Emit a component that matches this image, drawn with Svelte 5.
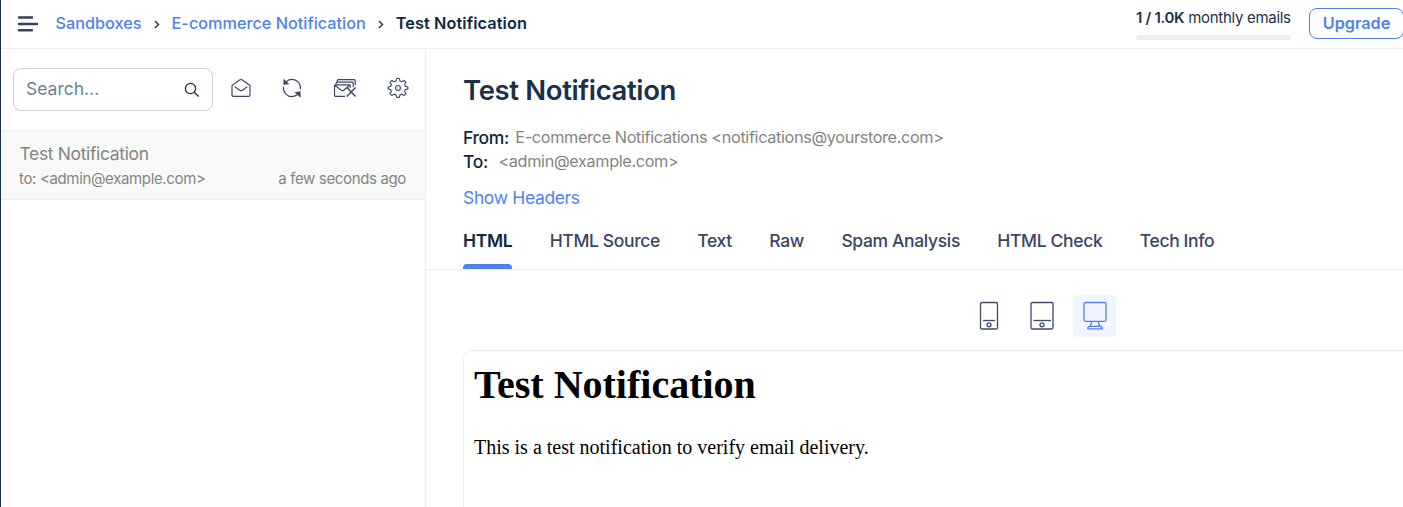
<script>
  const crumbs = ['Sandboxes', 'E-commerce Notification'];
  const tabs = ['HTML', 'HTML Source', 'Text', 'Raw', 'Spam Analysis', 'HTML Check', 'Tech Info'];
  let active = $state('HTML');
</script>

<div class="app">
  <header>
    <button class="plain menu" aria-label="Menu">
      <svg width="22" height="18" viewBox="0 0 22 18" fill="none" stroke="#35405a" stroke-width="2.4" stroke-linecap="round">
        <path d="M2 2.5h13M2 9h18M2 15.2h13" />
      </svg>
    </button>
    <nav>
      {#each crumbs as crumb}
        <span class="link">{crumb}</span>
        <svg class="chevron" width="6" height="9" viewBox="0 0 6 9" fill="none" stroke="#1b314a" stroke-width="1.4"><path d="M1 1l3.5 3.5L1 8" /></svg>
      {/each}
      <strong>Test Notification</strong>
    </nav>
    <div class="quota">
      <div class="usage"><b>1 / 1.0K</b> monthly emails</div>
      <div class="bar"></div>
    </div>
    <button class="upgrade">Upgrade</button>
  </header>

  <div class="body">
    <aside>
      <div class="tools">
        <div class="search">
          <span>Search...</span>
          <svg width="16" height="16" viewBox="0 0 16 16" fill="none" stroke="#1b2d49" stroke-width="1.3"><circle cx="6.5" cy="6.5" r="5.1" /><path d="M10.2 10.2l4.5 4.3" /></svg>
        </div>
        <div class="actions">
          <svg width="22" height="22" viewBox="0 0 22 22" fill="none" stroke="#3c4866" stroke-width="1.2" stroke-linejoin="round">
            <path d="M2 8.4L10 2.8q1-.6 2 0L20 8.4V18q0 1.3-1.3 1.3H3.3Q2 19.3 2 18zM4.8 9.7l5.2 3.7q1 .6 2 0l5.2-3.7" />
          </svg>
          <svg width="22" height="22" viewBox="0 0 22 22" fill="none" stroke="#3c4866" stroke-width="1.2">
            <path d="M2.400 9.800c-.4 5.600 3.600 9.800 8.600 9.800 2.300 0 4.300-.8 5.900-2.300" />
            <path d="M19.600 12.200c.4-5.600-3.600-9.800-8.600-9.800-2.300 0-4.300.8-5.900 2.300" />
            <path d="M3 3.200v4l4-.4zM19 14.900v4.400l-4.200-3.700z" fill="#3c4866" />
          </svg>
          <svg width="24" height="22" viewBox="0 0 24 22" fill="none" stroke="#3c4866" stroke-width="1.2" stroke-linejoin="round">
            <path d="M12 19.300H2.500q-1 0-1-1V8.800q0-1 1-1h13.800q1 0 1 1v2.200M2 8.200l6.200 5q1.200.8 2.400 0l6-5" />
            <path d="M2.600 7.500l1-2.300h15.600q1 0 1 1V10M4 4.800l.8-2.100h16.400q1 0 1 1V8" />
            <path d="M14 10.500l8.500 9M22.500 10.500l-8.700 9" stroke-width="1.500" />
          </svg>
          <svg width="22" height="22" viewBox="0 0 22 22" fill="none" stroke="#3c4866" stroke-width="1.200" stroke-linejoin="round">
            <g transform="translate(.6 .1) scale(.945)">
              <path d="M9.500 1.500h3l.6 2.700 2 .8 2.300-1.500 2.100 2.100L18 7.900l.8 2 2.700.6v2l-2.700.7-.8 1.900 1.500 2.300-2.100 2.100-2.300-1.500-2 .8-.6 2.700h-3l-.6-2.700-2-.8-2.300 1.500-2.100-2.100L4 15.100l-.8-1.900-2.700-.7v-2l2.700-.6.8-2-1.500-2.300 2.100-2.100L6.900 5l2-.8z" />
              <circle cx="11" cy="11.500" r="2.600" />
            </g>
          </svg>
        </div>
      </div>
      <article>
        <div class="subject">Test Notification</div>
        <div class="meta"><span>to: &lt;admin@example.com&gt;</span><span>a few seconds ago</span></div>
      </article>
    </aside>

    <main>
      <section class="message">
        <h1>Test Notification</h1>
        <div class="address"><b>From:</b><span>E-commerce Notifications &lt;notifications@yourstore.com&gt;</span></div>
        <div class="address to"><b>To:</b><span>&lt;admin@example.com&gt;</span></div>
        <span class="headers">Show Headers</span>
      </section>
      <div class="tabs">
        {#each tabs as tab}
          <button class="plain tab" class:active={active === tab} onclick={() => (active = tab)}>{tab}</button>
        {/each}
      </div>
      <div class="devices">
        <div class="device">
          <svg width="30" height="30" viewBox="0 0 30 30" fill="none" stroke="#3c4866" stroke-width="1.300"><rect x="6.500" y="1.500" width="17" height="26.500" rx="1.500" /><path d="M9 19.500h12" /><circle cx="15" cy="23.800" r="2" /></svg>
        </div>
        <div class="device">
          <svg width="30" height="30" viewBox="0 0 30 30" fill="none" stroke="#3c4866" stroke-width="1.300"><rect x="4" y="1.500" width="22" height="26.500" rx="1.500" /><path d="M6.500 19.500h17.500" /><circle cx="15" cy="23.800" r="2" /></svg>
        </div>
        <div class="device selected">
          <svg width="30" height="30" viewBox="0 0 30 30" fill="none" stroke="#4f82f0" stroke-width="1.300" stroke-linejoin="round"><rect x="4" y="1.500" width="22" height="18.800" rx="1.500" /><path d="M11.700 20.500l-1.400 4.700M18.300 20.500l1.400 4.700M9 25.300h12q1.300 1.200 1.300 2.500H7.700q0-1.300 1.300-2.500z" /></svg>
        </div>
      </div>
      <div class="preview">
        <h2>Test Notification</h2>
        <p>This is a test notification to verify email delivery.</p>
      </div>
    </main>
  </div>
</div>

<style>
  :global(body) { margin: 0; overflow: hidden; background: #fff; }
  * { box-sizing: border-box; }
  svg { display: block; flex: none; }
  .app { height: 507px; border-left: 1px solid #1b2d49; display: flex; flex-direction: column; font-family: Inter, sans-serif; color: #1b314a; overflow: hidden; }
  .plain { border: 0; padding: 0; background: none; font: inherit; color: inherit; }
  header { height: 49px; flex: none; border-bottom: 1px solid #ebeeed; display: flex; align-items: flex-start; }
  .menu { margin: 15px 0 0 16px; }
  nav { display: flex; align-items: center; height: 46px; margin-left: 16.5px; font-size: 16.25px; white-space: nowrap; }
  .link { color: #4f82f0; font-weight: 500; }
  .chevron { margin: 2px 12px 0 12px; }
  nav strong { font-weight: 600; color: #0f2740; letter-spacing: 0.1px; }
  .quota { width: 155px; margin-left: auto; padding-top: 8px; font-size: 15px; letter-spacing: -0.02em; line-height: 20px; white-space: nowrap; }
  .quota b { font-weight: 600; }
  .bar { height: 5px; margin-top: 7px; border-radius: 3px; background: #ededed; }
  .upgrade { width: 95px; height: 31px; margin: 8px -1px 0 18px; padding: 0 0 2px; border: 1px solid #4f82f0; border-radius: 8px; background: #fff; color: #4f82f0; font: 600 16.25px Inter, sans-serif; }
  .body { flex: 1; display: flex; min-height: 0; }
  aside { width: 425px; border-right: 1px solid #ebeeed; flex: none; }
  .tools { height: 81px; padding: 19px 0 0 12px; display: flex; }
  .search { width: 200px; height: 43px; border: 1px solid #cdd0d6; border-radius: 8px; display: flex; align-items: center; justify-content: space-between; padding: 0 12px; font-size: 17.5px; color: #6a8296; }
  .search span { padding-bottom: 2px; }
  .actions { display: flex; gap: 29.7px; margin: 9px 0 0 16.5px; height: 22px; }
  article { height: 70px; background: #f8faf9; border: solid #ebeeed; border-width: 1px 0; padding: 11px 19px 0 18px; color: #858580; letter-spacing: -0.022em; }
  .subject { font-size: 17.5px; line-height: 24px; padding-left: 0.5px; }
  .meta { display: flex; justify-content: space-between; font-size: 15px; line-height: 24px; padding-top: 1px; }
  main { flex: 1; min-width: 0; display: flex; flex-direction: column; letter-spacing: -0.022em; }
  .message { height: 170px; padding: 23px 0 0 37px; }
  h1 { margin: 0 0 17px; font-size: 27.5px; line-height: 36px; font-weight: 600; letter-spacing: -0.013em; }
  .address { display: flex; align-items: center; height: 24px; font-size: 16.25px; gap: 6.3px; color: #858580; }
  .address b { font-size: 17.5px; font-weight: 500; color: #0f2740; }
  .address.to { gap: 10.5px; }
  .headers { display: block; margin-top: 13px; color: #4f82f0; font-size: 17.5px; line-height: 24px; }
  .tabs { display: flex; gap: 37.4px; height: 51px; flex: none; padding-left: 37px; border-bottom: 1px solid #ebeeed; font-size: 17.5px; font-weight: 500; color: #3a4663; }
  .tab { letter-spacing: inherit; position: relative; padding-bottom: 7px; white-space: nowrap; }
  .active { color: #0f2740; font-weight: 600; }
  .active::after { content: ''; position: absolute; left: 0; right: 0; bottom: 0; height: 5px; border-radius: 4px 4px 0 0; background: #4f82f0; }
  .devices { display: flex; gap: 10px; height: 80px; flex: none; padding: 25px 0 0 541px; }
  .device { width: 43px; height: 42px; border-radius: 5px; display: grid; place-items: center; }
  .selected { background: #f0f5ff; }
  .preview { flex: 1; margin-left: 37px; border: solid #ebeeed; border-width: 1px 0 0 1px; border-radius: 9px 0 0 0; padding: 11px 10px; font-family: "Liberation Serif", serif; color: #000; letter-spacing: 0; }
  h2 { margin: 0; font-size: 40px; line-height: 46px; }
  p { margin: 28px 0 0; font-size: 20px; line-height: 23px; }
</style>
